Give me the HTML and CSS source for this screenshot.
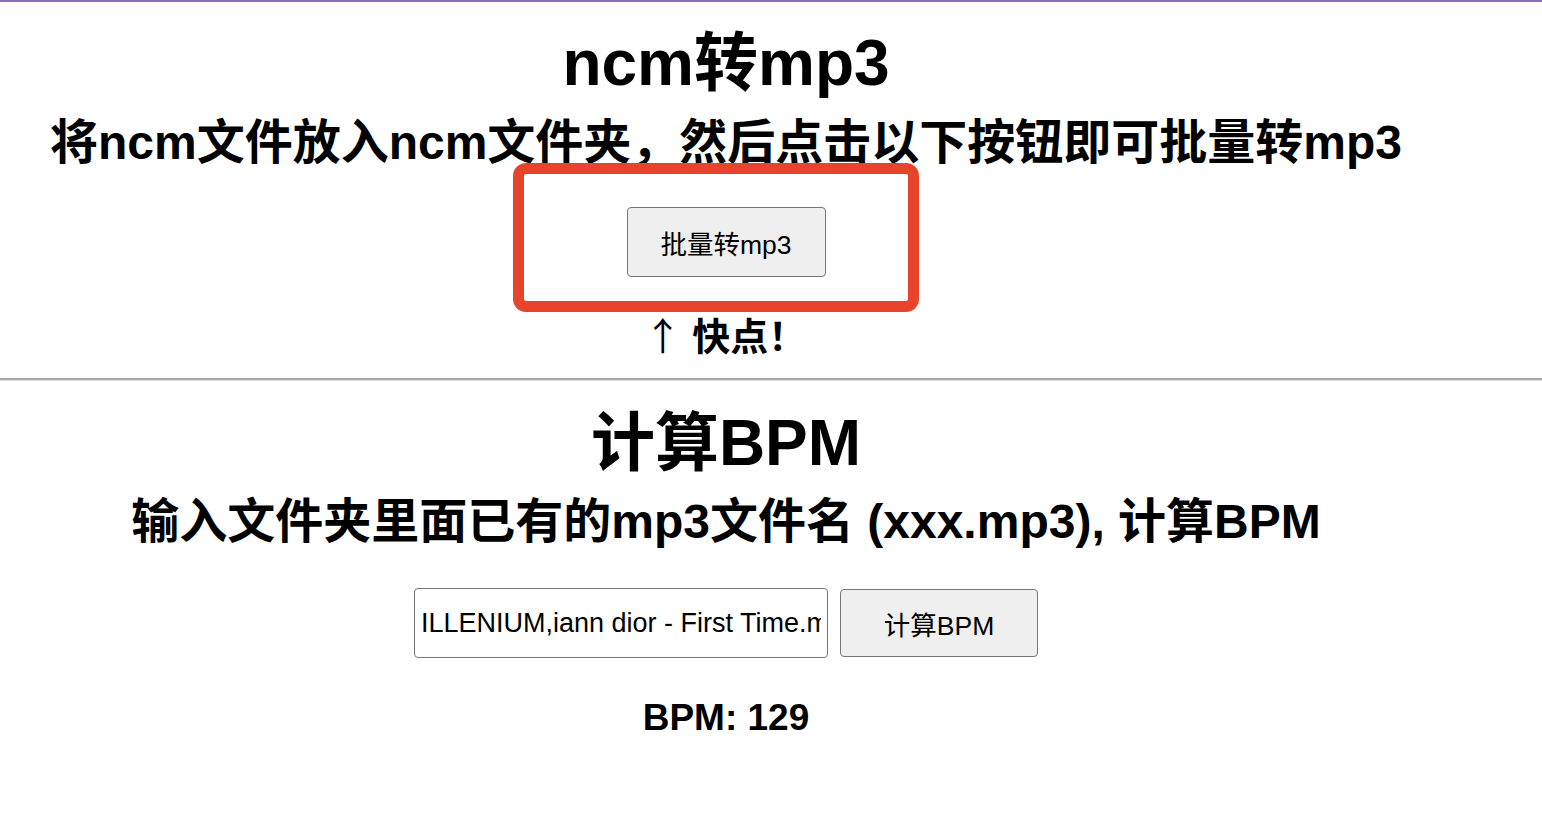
FILE: index.html
```html
<!DOCTYPE html>
<html lang="zh-CN">
<head>
<meta charset="utf-8">
<title>ncm转mp3</title>
<link rel="stylesheet" href="styles.css">
</head>
<body>
<main class="page">
  <section class="section">
    <h1 class="title">ncm转mp3</h1>
    <h2 class="subtitle">将ncm文件放入ncm文件夹，然后点击以下按钮即可批量转mp3</h2>
    <div class="action">
      <button class="btn btn-convert" type="button">批量转mp3</button>
      <span class="highlight"></span>
    </div>
    <h3 class="hint"><span class="arrow">↑</span> 快点！</h3>
  </section>
</main>
<hr class="divider">
<main class="page">
  <section class="section">
    <h1 class="title title-bpm">计算BPM</h1>
    <h2 class="subtitle subtitle-bpm">输入文件夹里面已有的mp3文件名 (xxx.mp3), 计算BPM</h2>
    <div class="form-row">
      <input class="file-input" type="text" value="ILLENIUM,iann dior - First Time.mp3">
      <button class="btn btn-bpm" type="button">计算BPM</button>
    </div>
    <h3 class="result">BPM: 129</h3>
  </section>
</main>
</body>
</html>
```

FILE: styles.css
```css
html, body {
  margin: 0;
  padding: 0;
  background: #ffffff;
}

body {
  border-top: 2px solid #8e71b4;
  font-family: "Liberation Sans", "Noto Sans CJK SC", sans-serif;
  color: #000;
}

.page {
  display: block;
  width: 1436px;
  margin-left: 8px;
}

.section {
  text-align: center;
}

.title {
  margin: 0;
  font-size: 64px;
  font-weight: bold;
  line-height: 74px;
  padding-top: 24px;
}

.subtitle {
  margin: 0;
  font-size: 48px;
  font-weight: bold;
  line-height: 56px;
  padding-top: 15px;
}

.action {
  position: relative;
  display: flex;
  justify-content: center;
  padding-top: 36px;
}

.btn {
  font-family: "Liberation Sans", "Noto Sans CJK SC", sans-serif;
  font-size: 26.5px;
  color: #000;
  background: #efefef;
  border: 1.5px solid #767676;
  border-radius: 4px;
  padding: 0;
  cursor: pointer;
}

.btn-convert {
  width: 199px;
  height: 70px;
}

.highlight {
  position: absolute;
  left: 505px;
  top: -8px;
  width: 384px;
  height: 127px;
  border: 11px solid #e8432b;
  border-radius: 13px;
  pointer-events: none;
}

.hint {
  margin: 0;
  font-size: 38px;
  font-weight: bold;
  line-height: 44px;
  padding-top: 35px;
  padding-right: 2px;
}

.arrow {
  font-family: "Noto Sans CJK SC", sans-serif;
  font-weight: normal;
  font-size: 38px;
}

.divider {
  margin: 19px 0 0 0;
  border: 0;
  height: 2px;
  background: #a8a8a8;
  border-bottom: 1px solid #dcdcdc;
}

.title-bpm {
  padding-top: 25px;
}

.subtitle-bpm {
  padding-top: 14px;
}

.form-row {
  display: flex;
  justify-content: center;
  align-items: center;
  gap: 12px;
  padding-top: 38px;
}

.file-input {
  box-sizing: border-box;
  width: 414px;
  height: 70px;
  padding: 0 6px;
  font-family: "Liberation Sans", "Noto Sans CJK SC", sans-serif;
  font-size: 27px;
  color: #000;
  border: 1.5px solid #767676;
  border-radius: 4px;
  background: #fff;
  outline: none;
}

.btn-bpm {
  width: 198px;
  height: 68px;
}

.result {
  margin: 0;
  font-size: 37px;
  font-weight: bold;
  line-height: 44px;
  padding-top: 38px;
}
```
